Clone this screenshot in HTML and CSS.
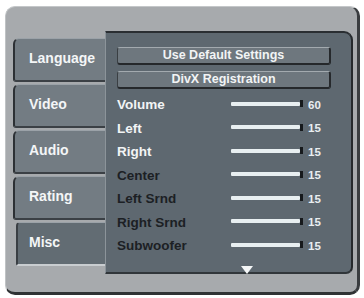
FILE: index.html
```html
<!DOCTYPE html>
<html lang="en">
<head>
    <meta charset="UTF-8">
    <title>Setup - Misc</title>
    <link rel="stylesheet" href="styles.css">
</head>
<body>
    <div class="frame">
        <div class="tabs">
            <div class="tab">Language</div>
            <div class="tab">Video</div>
            <div class="tab">Audio</div>
            <div class="tab">Rating</div>
            <div class="tab active">Misc</div>
        </div>

        <div class="panel">
            <div class="button">Use Default Settings</div>
            <div class="button">DivX Registration</div>

            <div class="rows">
                <div class="row"><span class="label">Volume</span><span class="bar"></span><span class="mark"></span><span class="value">60</span></div>
                <div class="row"><span class="label">Left</span><span class="bar"></span><span class="mark"></span><span class="value">15</span></div>
                <div class="row"><span class="label">Right</span><span class="bar"></span><span class="mark"></span><span class="value">15</span></div>
                <div class="row dim"><span class="label">Center</span><span class="bar"></span><span class="mark"></span><span class="value">15</span></div>
                <div class="row dim"><span class="label">Left Srnd</span><span class="bar"></span><span class="mark"></span><span class="value">15</span></div>
                <div class="row dim"><span class="label">Right Srnd</span><span class="bar"></span><span class="mark"></span><span class="value">15</span></div>
                <div class="row dim"><span class="label">Subwoofer</span><span class="bar"></span><span class="mark"></span><span class="value">15</span></div>
            </div>

            <div class="more"></div>
        </div>
    </div>
</body>
</html>
```

FILE: styles.css
```css
body {
    margin: 0;
    background-color: #ffffff;
    font-family: "Liberation Sans", Arial, sans-serif;
    font-weight: bold;
}

.frame {
    box-sizing: border-box;
    display: flex;
    width: 355px;
    height: 289px;
    margin: 6px 0 0 5px;
    padding: 24px 0 0 7px;
    background-color: #a7aaad;
    border-top: 1px solid #c4c7c9;
    border-left: 1px solid #bfc2c4;
    border-right: 3px solid #3a3d40;
    border-bottom: 3px solid #2f3234;
    border-radius: 10px;
}

.tabs {
    display: flex;
    flex-direction: column;
    gap: 2px;
    width: 92px;
    padding-top: 8px;
    margin-top: -1px;
}

.tab {
    box-sizing: border-box;
    height: 44px;
    padding: 10px 0 0 14px;
    background-color: #737c83;
    border-top: 1px solid #9ba2a8;
    border-left: 2px solid #2c3034;
    border-bottom: 2px solid #3b4045;
    border-radius: 6px 0 0 3px;
    color: #f4f6f7;
    font-size: 14px;
    line-height: 18px;
}

.tab.active {
    margin-left: 3px;
    background-color: #626c73;
    border-left: 2px solid #3a3f44;
    border-bottom: 2px solid #c9cdd0;
    border-radius: 4px 0 0 2px;
    padding-left: 11px;
}

.panel {
    box-sizing: border-box;
    width: 248px;
    height: 243px;
    padding: 14px 0 0 11px;
    background-color: #5e6870;
    border-top: 2px solid #2a2e32;
    border-right: 2px solid #25292c;
    border-bottom: 2px solid #31363a;
    border-left: 1px solid #8c949a;
    border-radius: 0 9px 7px 0;
}

.button {
    box-sizing: border-box;
    width: 214px;
    height: 18px;
    margin-bottom: 6px;
    background-color: #6e777e;
    border-top: 1px solid #a3aaaf;
    border-left: 1px solid #3a3f43;
    border-right: 2px solid #26292c;
    border-bottom: 2px solid #25282b;
    border-radius: 3px;
    color: #f2f4f5;
    font-size: 12.5px;
    line-height: 15px;
    text-align: center;
}

.rows {
    margin-top: -2px;
}

.row {
    display: flex;
    align-items: center;
    height: 23.5px;
    color: #f2f4f5;
}

.row.dim .label {
    color: #1c2024;
}

.label {
    width: 114px;
    font-size: 13.5px;
}

.bar {
    width: 69px;
    height: 4px;
    margin-top: -2px;
    background-color: #e8eff1;
    border-radius: 1px;
}

.mark {
    width: 3px;
    height: 7px;
    margin-top: -2px;
    background-color: #16191c;
}

.value {
    margin-left: 5px;
    font-size: 11.5px;
    color: #e9eef0;
}

.more {
    width: 0;
    height: 0;
    margin: 8px 0 0 124px;
    border-top: 8px solid #f4f6f7;
    border-left: 6px solid transparent;
    border-right: 6px solid transparent;
}
```
